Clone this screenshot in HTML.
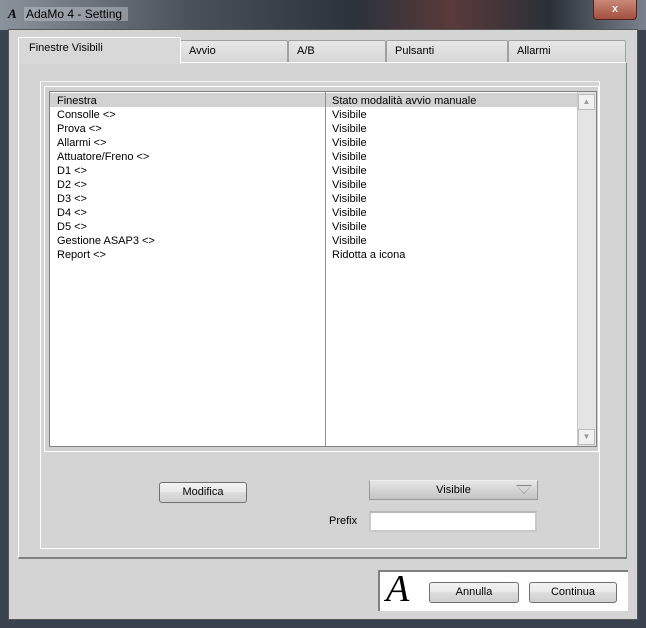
<!DOCTYPE html><html><head><style>
body{margin:0;width:646px;height:628px;overflow:hidden;background:#3a4250;font-family:"Liberation Sans",sans-serif;font-size:11px;position:relative}
div{position:absolute;box-sizing:border-box}
.t{white-space:nowrap}
.btn{border:1px solid #707070;border-radius:3px;background:linear-gradient(#f2f2f2,#ebebeb 45%,#dddddd 50%,#cfcfcf);text-align:center;line-height:18px;color:#000}
.tab{top:40px;height:22px;border:1px solid #a0a0a0;border-bottom:none;background:linear-gradient(#e8e8e8,#d6d6d6);padding:4px 0 0 8px;border-radius:2px 2px 0 0}
.row{left:0;width:100%;height:14px;line-height:14px}
</style></head><body>
<div style="left:0;top:0;width:646px;height:30px;background:linear-gradient(90deg,#8a929c,#4a505a 30%,#2c323b 55%,#5a3a3a 70%,#2a3038 85%,#7a828e)"></div>
<div class="t" style="left:8px;top:6px;color:#000;font-size:13px;font-family:'Liberation Serif',serif;font-style:italic;font-weight:bold">A</div>
<div class="t" style="left:24px;top:7px;font-size:12px;color:#000;background:rgba(190,195,200,.5);padding:0 6px 0 2px">AdaMo 4 - Setting</div>
<div style="left:593px;top:0;width:44px;height:20px;border:1px solid #502020;border-top:none;border-radius:0 0 4px 4px;background:linear-gradient(#c88878,#a45040);color:#eee;text-align:center;font-weight:bold;line-height:18px">x</div>
<div style="left:8px;top:29px;width:630px;height:591px;background:#d4d4d4;border:1px solid #555"></div>
<div style="left:18px;top:62px;width:609px;height:497px;border:1px solid #fff;border-right-color:#808080;border-bottom:2px solid #808080;background:#d4d4d4"></div>
<div class="tab" style="left:180px;width:108px">Avvio</div>
<div class="tab" style="left:288px;width:98px">A/B</div>
<div class="tab" style="left:386px;width:122px">Pulsanti</div>
<div class="tab" style="left:508px;width:118px">Allarmi</div>
<div class="tab" style="left:18px;top:37px;width:163px;height:27px;background:#d8d8d8;border-color:#fff;padding:4px 0 0 10px">Finestre Visibili</div>
<div style="left:40px;top:81px;width:560px;height:468px;border:1px solid #fff;border-top-color:#f0f0f0"></div>
<div style="left:44px;top:86px;width:555px;height:366px;border:1px solid #fff;background:#d0d0d0"></div>
<div style="left:49px;top:91px;width:548px;height:356px;border:1px solid #808080;background:#fff"></div>
<div style="left:50px;top:92px;width:527px;height:354px">
<div style="left:0;top:1px;width:100%;height:14px;background:#d2d2d2"></div>
<div style="left:275px;top:0;width:1px;height:354px;background:#909090"></div>
<div style="left:7px;top:2px;width:260px">
<div class="row" style="top:0">Finestra</div><div class="row" style="top:14px">Consolle &lt;&gt;</div><div class="row" style="top:28px">Prova &lt;&gt;</div><div class="row" style="top:42px">Allarmi &lt;&gt;</div><div class="row" style="top:56px">Attuatore/Freno &lt;&gt;</div><div class="row" style="top:70px">D1 &lt;&gt;</div><div class="row" style="top:84px">D2 &lt;&gt;</div><div class="row" style="top:98px">D3 &lt;&gt;</div><div class="row" style="top:112px">D4 &lt;&gt;</div><div class="row" style="top:126px">D5 &lt;&gt;</div><div class="row" style="top:140px">Gestione ASAP3 &lt;&gt;</div><div class="row" style="top:154px">Report &lt;&gt;</div></div>
<div style="left:282px;top:2px;width:240px">
<div class="row" style="top:0">Stato modalità avvio manuale</div><div class="row" style="top:14px">Visibile</div><div class="row" style="top:28px">Visibile</div><div class="row" style="top:42px">Visibile</div><div class="row" style="top:56px">Visibile</div><div class="row" style="top:70px">Visibile</div><div class="row" style="top:84px">Visibile</div><div class="row" style="top:98px">Visibile</div><div class="row" style="top:112px">Visibile</div><div class="row" style="top:126px">Visibile</div><div class="row" style="top:140px">Visibile</div><div class="row" style="top:154px">Ridotta a icona</div></div>
</div>
<div style="left:577px;top:92px;width:19px;height:354px;background:#e4e4e4;border-left:1px solid #c8c8c8"></div>
<div style="left:578px;top:94px;width:17px;height:16px;background:#f0f0f0;border:1px solid #bbb;color:#999;font-size:8px;text-align:center;line-height:14px">▲</div>
<div style="left:578px;top:429px;width:17px;height:16px;background:#f0f0f0;border:1px solid #bbb;color:#999;font-size:8px;text-align:center;line-height:14px">▼</div>
<div class="btn" style="left:159px;top:482px;width:88px;height:21px">Modifica</div>
<div style="left:369px;top:480px;width:169px;height:20px;border:1px solid #999;border-top-color:#eee;background:linear-gradient(#e6e6e6,#c4c4c4);text-align:center;line-height:19px">Visibile</div>
<div style="left:516px;top:485px;width:0;height:0;border-left:8px solid transparent;border-right:8px solid transparent;border-top:9px solid #888"></div>
<div style="left:517px;top:486px;width:0;height:0;border-left:7px solid transparent;border-right:7px solid transparent;border-top:7px solid #d8d8d8"></div>
<div class="t" style="left:329px;top:515px">Prefix</div>
<div style="left:369px;top:511px;width:168px;height:21px;background:#fff;border:2px solid #c8c8c8;border-top-color:#b8b8b8"></div>
<div style="left:378px;top:570px;width:250px;height:41px;background:#fff;border-top:2px solid #808080;border-left:2px solid #808080"></div>
<div class="t" style="left:386px;top:568px;font-family:'Liberation Serif',serif;font-style:italic;font-size:38px;line-height:42px;color:#000">A</div>
<div class="btn" style="left:429px;top:582px;width:90px;height:21px">Annulla</div>
<div class="btn" style="left:529px;top:582px;width:88px;height:21px">Continua</div>
</body></html>
